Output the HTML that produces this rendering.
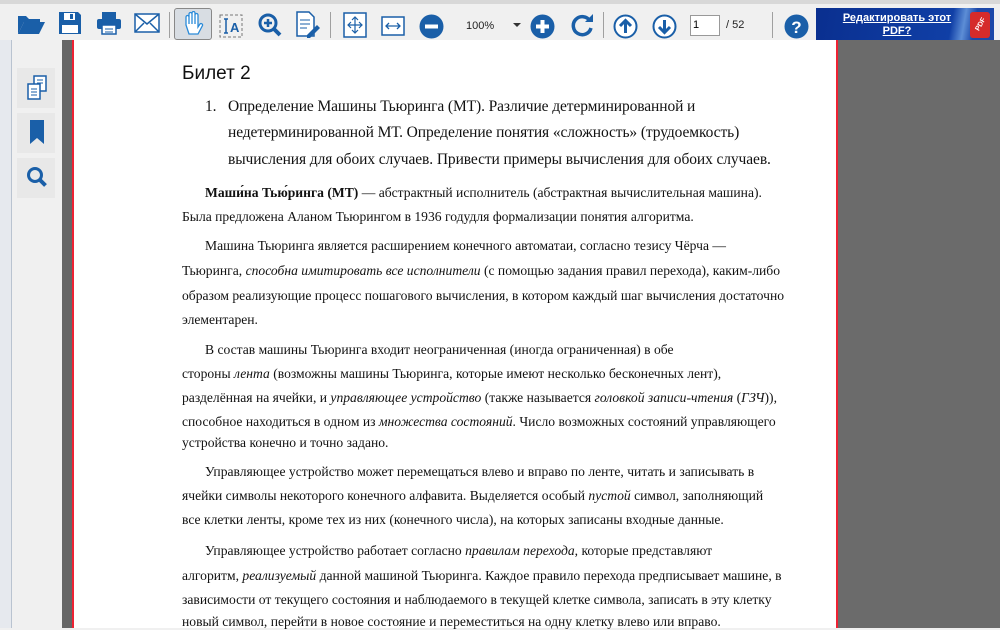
<!DOCTYPE html>
<html><head><meta charset="utf-8"><style>
*{margin:0;padding:0;box-sizing:border-box}
body{width:1000px;height:628px;overflow:hidden;background:#f0f0f0;position:relative;font-family:"Liberation Sans",sans-serif}
.a{position:absolute}
#tb{left:0;top:0;width:1000px;height:40px;background:#f0f0f0;border-top:4px solid #d8d8d8}
.sep{position:absolute;top:8px;width:1px;height:26px;background:#a0a0a0}
#page{left:72px;top:40px;width:766px;height:588px;background:#fff;border-left:2px solid #e23;border-right:2px solid #e23}
.t{position:absolute;font-family:"Liberation Serif",serif;font-size:13.6px;color:#111;white-space:nowrap;line-height:16px}
.h{font-size:15.5px;line-height:18px;letter-spacing:-0.1px}
i{font-style:italic}
</style></head><body>
<div class="a" style="left:0;top:0;width:12px;height:628px;background:#e6e9ee;border-right:1px solid #b9c3d0"></div>
<div id="tb" class="a">
<svg class="a" style="left:16px;top:6px" width="30" height="26" viewBox="0 0 30 26"><path d="M2 6h8l3 3h11v3H8L2 24z" fill="#1a5fa8"/><path d="M8 12h21l-6 12H2z" fill="#1a5fa8"/></svg>
<svg class="a" style="left:58px;top:6px" width="24" height="26" viewBox="0 0 24 26"><path d="M1 2h19l3 3v19H1z" fill="#1a5fa8"/><rect x="6" y="3" width="11" height="7" fill="#fff"/><rect x="12" y="4" width="3" height="5" fill="#1a5fa8"/><rect x="4" y="15" width="16" height="8" fill="#fff"/></svg>
<svg class="a" style="left:96px;top:7px" width="26" height="24" viewBox="0 0 26 24"><rect x="6" y="1" width="14" height="7" fill="#1a5fa8"/><rect x="1" y="8" width="24" height="10" rx="2" fill="#1a5fa8"/><rect x="6" y="14" width="14" height="9" fill="#fff" stroke="#1a5fa8" stroke-width="1.5"/><path d="M9 18h8M9 21h8" stroke="#1a5fa8"/></svg>
<svg class="a" style="left:134px;top:9px" width="26" height="20" viewBox="0 0 26 20"><rect x="1" y="1" width="24" height="18" fill="#fff" stroke="#1a5fa8" stroke-width="1.5"/><path d="M1 1l12 10 12-10M1 19l9-9M25 19l-9-9" stroke="#1a5fa8" fill="none" stroke-width="1.5"/></svg>
<div class="sep" style="left:169px"></div>
<div class="a" style="left:174px;top:4px;width:38px;height:32px;background:#d8dde3;border:1px solid #888;border-radius:3px"></div>
<svg class="a" style="left:181px;top:7px" width="24" height="26" viewBox="0 0 24 26"><path d="M5 14V6a1.5 1.5 0 013 0v7V3a1.5 1.5 0 013 0v10V2a1.5 1.5 0 013 0v11V4a1.5 1.5 0 013 0v12l2-3a1.5 1.5 0 012.5 1.5L17 23H8z" fill="#fff" stroke="#2a8ad8" stroke-width="1.3"/></svg>
<svg class="a" style="left:219px;top:10px" width="24" height="24" viewBox="0 0 24 24"><rect x="1" y="1" width="22" height="22" fill="none" stroke="#777" stroke-dasharray="3 2"/><path d="M5 5h4M7 5v14M5 19h4" stroke="#1a5fa8" stroke-width="1.5"/><text x="11" y="18" font-size="13" font-weight="bold" fill="#1a5fa8" font-family="Liberation Sans">A</text></svg>
<svg class="a" style="left:258px;top:9px" width="24" height="24" viewBox="0 0 24 24"><circle cx="10" cy="10" r="8" fill="none" stroke="#1a5fa8" stroke-width="3"/><path d="M15 15l7 7" stroke="#1a5fa8" stroke-width="4"/><path d="M6 10h8M10 6v8" stroke="#1a5fa8" stroke-width="2.5"/></svg>
<svg class="a" style="left:295px;top:7px" width="26" height="28" viewBox="0 0 26 28"><path d="M2 1h12l5 5v19H2z" fill="#fff" stroke="#1a5fa8" stroke-width="1.5"/><path d="M5 9h10M5 13h10M5 17h7" stroke="#1a5fa8"/><path d="M12 24l10-10 3 3-10 10h-3z" fill="#1a5fa8"/></svg>
<div class="sep" style="left:330px"></div>
<svg class="a" style="left:343px;top:8px" width="24" height="26" viewBox="0 0 24 26"><rect x="1" y="1" width="22" height="24" fill="#fff" stroke="#1a5fa8" stroke-width="1.5"/><path d="M12 5v16M5 13h14M9 8l3-3 3 3M9 18l3 3 3-3M8 10l-3 3 3 3M16 10l3 3-3 3" stroke="#1a5fa8" fill="none" stroke-width="1.2"/></svg>
<svg class="a" style="left:381px;top:12px" width="24" height="20" viewBox="0 0 24 20"><rect x="1" y="1" width="22" height="18" fill="#fff" stroke="#1a5fa8" stroke-width="1.5"/><path d="M5 10h14M8 7l-3 3 3 3M16 7l3 3-3 3" stroke="#1a5fa8" fill="none" stroke-width="1.3"/></svg>
<svg class="a" style="left:419px;top:10px" width="25" height="25"><circle cx="12.5" cy="12.5" r="12" fill="#1a5fa8"/><rect x="6" y="10.5" width="13" height="4" fill="#fff"/></svg>
<div class="a" style="left:466px;top:16px;font-size:11px;color:#222">100%</div>
<div class="a" style="left:513px;top:19px;width:0;height:0;border-left:4px solid transparent;border-right:4px solid transparent;border-top:4px solid #333"></div>
<svg class="a" style="left:530px;top:10px" width="25" height="25"><circle cx="12.5" cy="12.5" r="12" fill="#1a5fa8"/><path d="M6 12.5h13M12.5 6v13" stroke="#fff" stroke-width="4"/></svg>
<svg class="a" style="left:571px;top:9px" width="24" height="24" viewBox="0 0 24 24"><path d="M19 8A9 9 0 1 0 20 15" fill="none" stroke="#1a5fa8" stroke-width="3.5"/><path d="M14 9h8V1z" fill="#1a5fa8"/></svg>
<div class="sep" style="left:603px"></div>
<svg class="a" style="left:613px;top:10px" width="25" height="25"><circle cx="12.5" cy="12.5" r="11" fill="#fff" stroke="#1a5fa8" stroke-width="2"/><path d="M12.5 19V7M7 12l5.5-5.5L18 12" stroke="#1a5fa8" stroke-width="3" fill="none"/></svg>
<svg class="a" style="left:652px;top:10px" width="25" height="25"><circle cx="12.5" cy="12.5" r="11" fill="#fff" stroke="#1a5fa8" stroke-width="2"/><path d="M12.5 6v12M7 13l5.5 5.5L18 13" stroke="#1a5fa8" stroke-width="3" fill="none"/></svg>
<div class="a" style="left:690px;top:11px;width:30px;height:21px;background:#fff;border:1px solid #999;font-size:11px;padding:3px 2px;color:#000">1</div>
<div class="a" style="left:726px;top:15px;font-size:11px;color:#222">/ 52</div>
<div class="sep" style="left:772px"></div>
<svg class="a" style="left:784px;top:10px" width="25" height="25"><circle cx="12.5" cy="12.5" r="12" fill="#1a5fa8"/><text x="12.5" y="19" font-size="17" font-weight="bold" fill="#fff" text-anchor="middle" font-family="Liberation Sans">?</text></svg>
<div class="a" style="left:816px;top:4px;width:178px;height:33px;background:linear-gradient(100deg,#0a2f8f 0%,#103fa6 75%,#5d8ed6 82%,#1c48a8 88%);"></div>
<div class="a" style="left:822px;top:8px;width:150px;text-align:center;color:#fff;font-size:11px;font-weight:bold;line-height:13px;text-decoration:underline">Редактировать этот<br>PDF?</div>
<div class="a" style="left:970px;top:8px;width:20px;height:26px;background:#d52b2b;border-radius:3px"></div>
<div class="a" style="left:974px;top:17px;font-size:7px;color:#fff;font-weight:bold;transform:rotate(-60deg)">PDF</div>
</div>
<div class="a" style="left:62px;top:40px;width:10px;height:588px;background:#666"></div>
<div class="a" style="left:17px;top:68px;width:38px;height:40px;background:#e8e8e8"></div>
<div class="a" style="left:17px;top:113px;width:38px;height:40px;background:#e8e8e8"></div>
<div class="a" style="left:17px;top:158px;width:38px;height:40px;background:#e8e8e8"></div>
<svg class="a" style="left:26px;top:75px" width="22" height="26" viewBox="0 0 22 26"><rect x="8" y="1" width="12" height="15" fill="#fff" stroke="#1a5fa8" stroke-width="1.5"/><rect x="2" y="9" width="12" height="15" fill="#fff" stroke="#1a5fa8" stroke-width="1.5"/><path d="M11 5h6M11 8h6M5 14h6M5 17h6M5 20h6" stroke="#1a5fa8"/></svg>
<svg class="a" style="left:30px;top:120px" width="14" height="24"><path d="M0 0h14v24l-7-6-7 6z" fill="#1a5fa8"/></svg>
<svg class="a" style="left:26px;top:166px" width="22" height="22"><circle cx="9" cy="9" r="6.5" fill="none" stroke="#1a5fa8" stroke-width="3"/><path d="M13.5 13.5l6 6" stroke="#1a5fa8" stroke-width="4"/></svg>
<div class="a" style="left:838px;top:40px;width:162px;height:588px;background:#6b6b6b"></div>
<div id="page" class="a"></div>
<div class="a" style="left:182px;top:63px;font-size:19px;color:#111">Билет 2</div>
<div class="t h" style="left:205px;top:98px">1.</div>
<div class="t h" style="left:228px;top:98px">Определение Машины Тьюринга (МТ). Различие детерминированной и</div>
<div class="t h" style="left:228px;top:124px">недетерминированной МТ. Определение понятия «сложность» (трудоемкость)</div>
<div class="t h" style="left:228px;top:151px">вычисления для обоих случаев. Привести примеры вычисления для обоих случаев.</div>
<div class="t" style="left:205px;top:185px"><b>Маши́на Тью́ринга (МТ)</b> — абстрактный исполнитель (абстрактная вычислительная машина).</div>
<div class="t" style="left:182px;top:209px">Была предложена Аланом Тьюрингом в 1936 годудля формализации понятия алгоритма.</div>
<div class="t" style="left:205px;top:238px">Машина Тьюринга является расширением конечного автоматаи, согласно тезису Чёрча —</div>
<div class="t" style="left:182px;top:263px">Тьюринга, <i>способна имитировать все исполнители</i> (с помощью задания правил перехода), каким-либо</div>
<div class="t" style="left:182px;top:288px">образом реализующие процесс пошагового вычисления, в котором каждый шаг вычисления достаточно</div>
<div class="t" style="left:182px;top:312px">элементарен.</div>
<div class="t" style="left:205px;top:342px">В состав машины Тьюринга входит неограниченная (иногда ограниченная) в обе</div>
<div class="t" style="left:182px;top:366px">стороны <i>лента</i> (возможны машины Тьюринга, которые имеют несколько бесконечных лент),</div>
<div class="t" style="left:182px;top:390px">разделённая на ячейки, и <i>управляющее устройство</i> (также называется <i>головкой записи-чтения</i> (<i>ГЗЧ</i>)),</div>
<div class="t" style="left:182px;top:414px">способное находиться в одном из <i>множества состояний</i>. Число возможных состояний управляющего</div>
<div class="t" style="left:182px;top:435px">устройства конечно и точно задано.</div>
<div class="t" style="left:205px;top:464px">Управляющее устройство может перемещаться влево и вправо по ленте, читать и записывать в</div>
<div class="t" style="left:182px;top:488px">ячейки символы некоторого конечного алфавита. Выделяется особый <i>пустой</i> символ, заполняющий</div>
<div class="t" style="left:182px;top:512px">все клетки ленты, кроме тех из них (конечного числа), на которых записаны входные данные.</div>
<div class="t" style="left:205px;top:543px">Управляющее устройство работает согласно <i>правилам перехода</i>, которые представляют</div>
<div class="t" style="left:182px;top:568px">алгоритм, <i>реализуемый</i> данной машиной Тьюринга. Каждое правило перехода предписывает машине, в</div>
<div class="t" style="left:182px;top:592px">зависимости от текущего состояния и наблюдаемого в текущей клетке символа, записать в эту клетку</div>
<div class="t" style="left:182px;top:614px">новый символ, перейти в новое состояние и переместиться на одну клетку влево или вправо.</div>
</body></html>
